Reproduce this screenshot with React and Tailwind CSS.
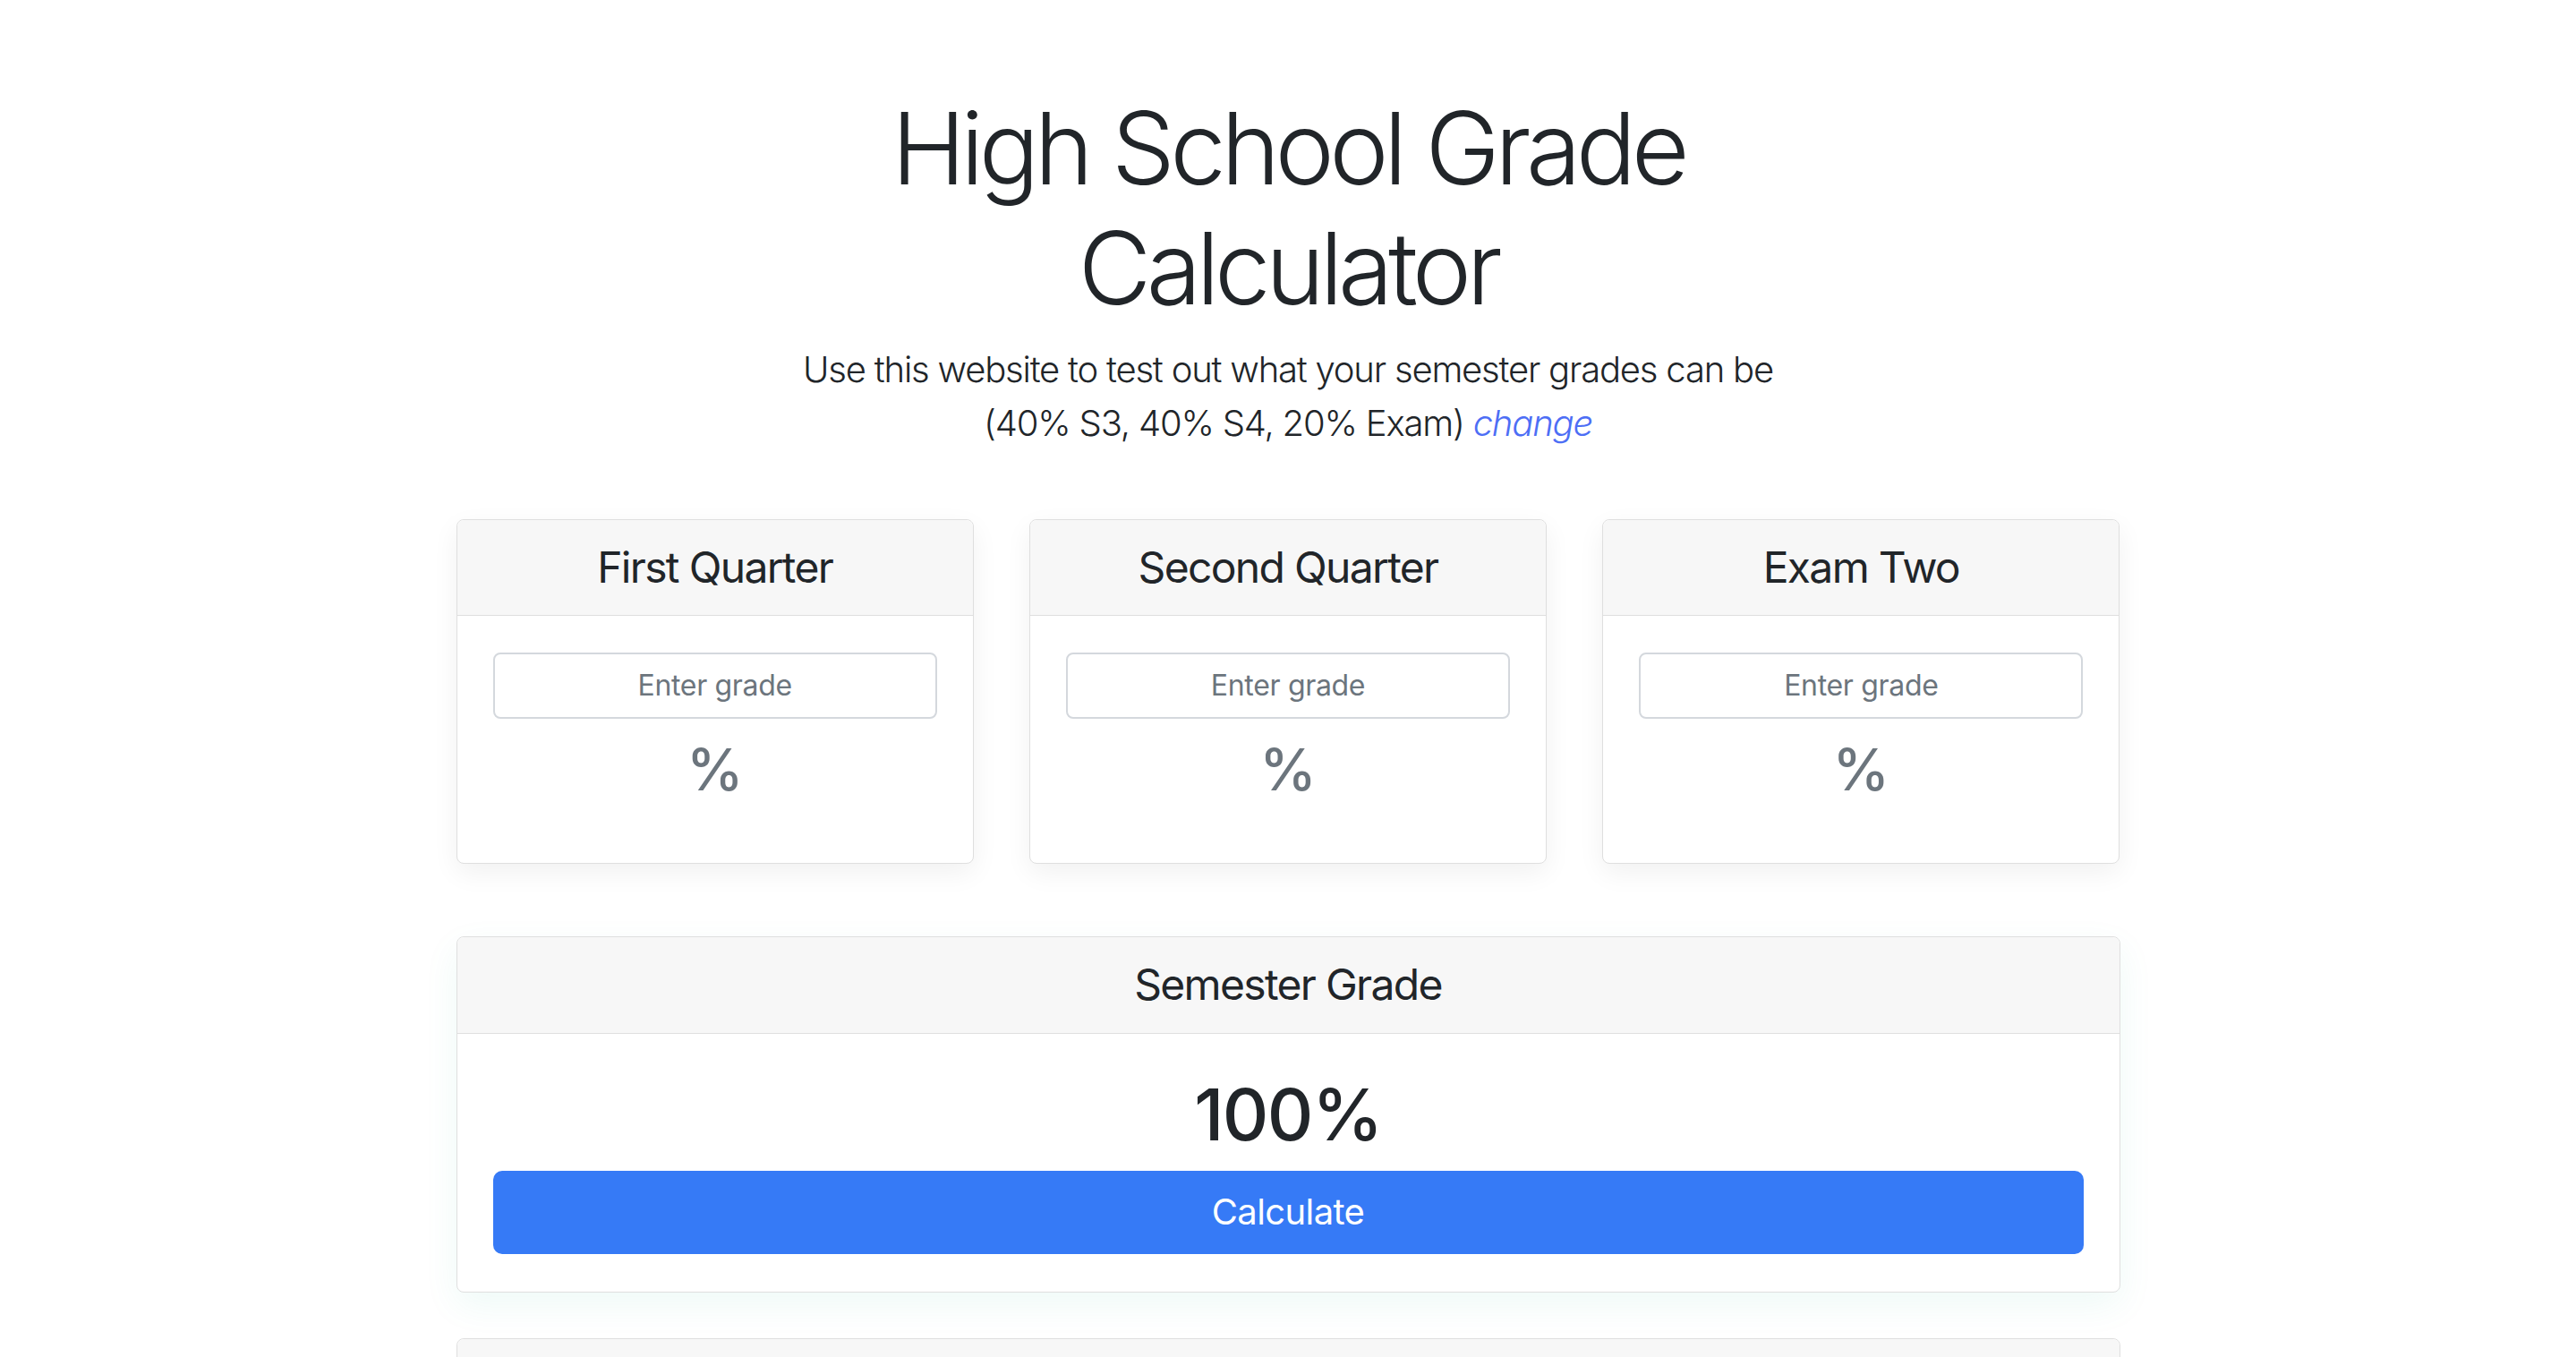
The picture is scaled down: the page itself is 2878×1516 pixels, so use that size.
import React from "react";

function QuarterCard({ title }) {
  return (
    <div className="bg-white border border-[#dfdfdf] rounded-[8px] h-[385px] flex flex-col shadow-[0_10px_30px_rgba(0,0,0,0.06)]">
      <div className="h-[107px] shrink-0 bg-[#f7f7f7] border-b border-[#dfdfdf] rounded-t-[8px] flex items-center justify-center text-[48px] leading-none tracking-[-0.035em] text-[#212529]">
        {title}
      </div>
      <div className="px-[40px] pt-[41px]">
        <input
          type="text"
          placeholder="Enter grade"
          className="w-full h-[74px] border-2 border-[#d4d8dd] rounded-[8px] text-center text-[32px] tracking-[-0.01em] text-[#495057] placeholder:text-[#6c757d] outline-none bg-white"
        />
        <div className="mt-[18px] text-center text-[64px] leading-[77px] font-medium text-[#6c757d]">%</div>
      </div>
    </div>
  );
}

export default function App() {
  return (
    <div className="min-h-screen bg-white font-['Inter','Liberation_Sans',sans-serif] text-[#212529] overflow-hidden">
      <div className="pt-[98px] text-center">
        <h1 className="text-[112px] leading-[1.2] font-light tracking-[-0.05em]">
          High School Grade
          <br />
          Calculator
        </h1>
        <p className="mt-[16px] text-[40px] leading-[60px] font-light tracking-[-0.03em]">
          Use this website to test out what your semester grades can be
          <br />
          (40% S3, 40% S4, 20% Exam){" "}
          <a href="#" className="italic text-[#4d6ef5]">change</a>
        </p>
      </div>

      <div className="w-[1859px] mx-auto mt-[77px]">
        <div className="grid grid-cols-3 gap-[62px]">
          <QuarterCard title="First Quarter" />
          <QuarterCard title="Second Quarter" />
          <QuarterCard title="Exam Two" />
        </div>

        <div className="mt-[81px] bg-white border border-[#dfdfdf] rounded-[8px] shadow-[0_14px_40px_rgba(0,190,140,0.07)]">
          <div className="h-[108px] bg-[#f7f7f7] border-b border-[#dfdfdf] rounded-t-[8px] flex items-center justify-center text-[48px] leading-none tracking-[-0.035em]">
            Semester Grade
          </div>
          <div className="px-[40px] pt-[42px] pb-[42px] text-center">
            <div className="text-[80px] leading-[96px] font-medium tracking-[-0.02em]">100%</div>
            <button className="mt-[15px] w-full h-[93px] rounded-[10px] bg-[#367af6] text-white text-[40px] leading-none tracking-[-0.015em]">
              Calculate
            </button>
          </div>
        </div>

        <div className="mt-[51px] bg-white border border-[#dfdfdf] rounded-[8px]">
          <div className="h-[108px] bg-[#f7f7f7] border-b border-[#dfdfdf] rounded-t-[8px]"></div>
          <div className="h-[200px]"></div>
        </div>
      </div>
    </div>
  );
}
